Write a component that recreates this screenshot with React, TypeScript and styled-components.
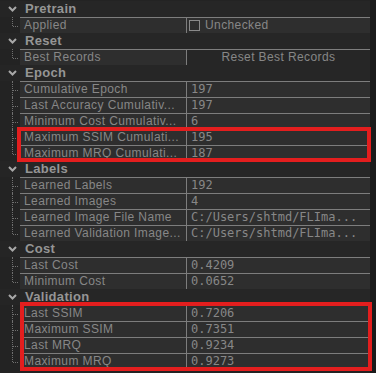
import React from "react";
import styled, { createGlobalStyle } from "styled-components";

const GlobalStyle = createGlobalStyle`
  html, body {
    margin: 0;
    padding: 0;
    background: #232323;
  }
`;

interface Item {
  name: string;
  value: string;
  kind?: "check" | "button";
}

interface Group {
  title: string;
  items: Item[];
  highlight?: number[];
}

const groups: Group[] = [
  { title: "Pretrain", items: [{ name: "Applied", value: "Unchecked", kind: "check" }] },
  { title: "Reset", items: [{ name: "Best Records", value: "Reset Best Records", kind: "button" }] },
  {
    title: "Epoch",
    items: [
      { name: "Cumulative Epoch", value: "197" },
      { name: "Last Accuracy Cumulativ...", value: "197" },
      { name: "Minimum Cost Cumulativ...", value: "6" },
      { name: "Maximum SSIM Cumulati...", value: "195" },
      { name: "Maximum MRQ Cumulati...", value: "187" },
    ],
    highlight: [3, 4],
  },
  {
    title: "Labels",
    items: [
      { name: "Learned Labels", value: "192" },
      { name: "Learned Images", value: "4" },
      { name: "Learned Image File Name", value: "C:/Users/shtmd/FLIma..." },
      { name: "Learned Validation Image...", value: "C:/Users/shtmd/FLIma..." },
    ],
  },
  {
    title: "Cost",
    items: [
      { name: "Last Cost", value: "0.4209" },
      { name: "Minimum Cost", value: "0.0652" },
    ],
  },
  {
    title: "Validation",
    items: [
      { name: "Last SSIM", value: "0.7206" },
      { name: "Maximum SSIM", value: "0.7351" },
      { name: "Last MRQ", value: "0.9234" },
      { name: "Maximum MRQ", value: "0.9273" },
    ],
    highlight: [0, 1, 2, 3],
  },
];

const Page = styled.div`
  display: grid;
  grid-template-columns: 1fr 6px;
  min-height: 100vh;
  background: #232323;
`;

const Scroll = styled.div`
  background: #1b1b1b;
`;

const Tree = styled.div`
  padding-top: 1px;
  display: flex;
  flex-direction: column;
`;

const Header = styled.div`
  display: grid;
  grid-template-columns: 20px 1fr;
  height: 16px;
  align-items: center;
  background: #252525;
`;

const Chevron = styled.svg`
  width: 9px;
  height: 6px;
  margin-left: 8px;
`;

const Title = styled.div`
  padding-left: 5px;
  font-family: "Liberation Sans", Arial, sans-serif;
  font-weight: bold;
  font-size: 13px;
  letter-spacing: 0.3px;
  line-height: 16px;
  color: #959595;
  background: #262626;
`;

const Row = styled.div`
  display: grid;
  grid-template-columns: 20px 167px 1fr;
  height: 16px;
`;

const Connector = styled.div<{ $last: boolean }>`
  position: relative;
  &::before {
    content: "";
    position: absolute;
    left: 12px;
    top: 0;
    height: ${(p) => (p.$last ? "9px" : "16px")};
    border-left: 1px dotted #707070;
  }
  &::after {
    content: "";
    position: absolute;
    left: 13px;
    top: 9px;
    width: 5px;
    border-top: 1px dotted #707070;
  }
`;

const Name = styled.div`
  border-top: 1px solid #7d7d7d;
  border-right: 1px solid #7d7d7d;
  background: #2e2e2e;
  padding-left: 4px;
  font-family: "Liberation Sans", Arial, sans-serif;
  font-size: 12px;
  letter-spacing: 0.4px;
  line-height: 15px;
  color: #878787;
  white-space: nowrap;
  overflow: hidden;
`;

const Value = styled.div<{ $button?: boolean }>`
  border-top: 1px solid #7d7d7d;
  background: ${(p) => (p.$button ? "#262626" : "#2e2e2e")};
  display: flex;
  align-items: center;
  justify-content: ${(p) => (p.$button ? "center" : "flex-start")};
  padding-left: ${(p) => (p.$button ? "0" : "4px")};
  font-family: ${(p) =>
    p.$button ? `"Liberation Sans", Arial, sans-serif` : `"DejaVu Sans Mono", monospace`};
  font-size: 12px;
  letter-spacing: ${(p) => (p.$button ? "0.4px" : "0")};
  line-height: 15px;
  color: #878787;
  white-space: nowrap;
  overflow: hidden;
`;

const Check = styled.span`
  width: 11px;
  height: 11px;
  border: 1px solid #8a8a8a;
  margin: 0 5px 0 -2px;
  box-sizing: border-box;
  flex: none;
`;

const CheckLabel = styled.span`
  font-family: "Liberation Sans", Arial, sans-serif;
  letter-spacing: 0.4px;
`;

const Highlight = styled.div<{ $t: number; $b: number; $l: number; $r: number }>`
  position: relative;
  &::after {
    content: "";
    position: absolute;
    top: ${(p) => p.$t}px;
    bottom: ${(p) => p.$b}px;
    left: ${(p) => p.$l}px;
    right: ${(p) => p.$r}px;
    border: 4px solid #e31e1e;
    pointer-events: none;
  }
`;

const boxes: Record<string, [number, number, number, number]> = {
  Epoch: [-2, -1, 17, -1],
  Validation: [-3, -2, 20, -2],
};

function ItemRow({ item, last }: { item: Item; last: boolean }) {
  return (
    <Row>
      <Connector $last={last} />
      <Name>{item.name}</Name>
      <Value $button={item.kind === "button"}>
        {item.kind === "check" ? (
          <>
            <Check />
            <CheckLabel>{item.value}</CheckLabel>
          </>
        ) : (
          item.value
        )}
      </Value>
    </Row>
  );
}

function Category({ group }: { group: Group }) {
  const hl = group.highlight ?? [];
  const n = group.items.length;
  const plain = group.items.filter((_, i) => !hl.includes(i));
  const marked = group.items.filter((_, i) => hl.includes(i));
  const box = boxes[group.title];
  return (
    <>
      <Header>
        <Chevron viewBox="0 0 9 6">
          <polyline points="1,1 4.5,4.5 8,1" fill="none" stroke="#a8a8a8" strokeWidth="2" />
        </Chevron>
        <Title>{group.title}</Title>
      </Header>
      {plain.map((it, i) => (
        <ItemRow key={it.name} item={it} last={i === n - 1} />
      ))}
      {marked.length > 0 && (
        <Highlight $t={box[0]} $b={box[1]} $l={box[2]} $r={box[3]}>
          {marked.map((it, i) => (
            <ItemRow key={it.name} item={it} last={plain.length + i === n - 1} />
          ))}
        </Highlight>
      )}
    </>
  );
}

export default function App() {
  return (
    <Page>
      <GlobalStyle />
      <Tree>
        {groups.map((g) => (
          <Category key={g.title} group={g} />
        ))}
      </Tree>
      <Scroll />
    </Page>
  );
}
